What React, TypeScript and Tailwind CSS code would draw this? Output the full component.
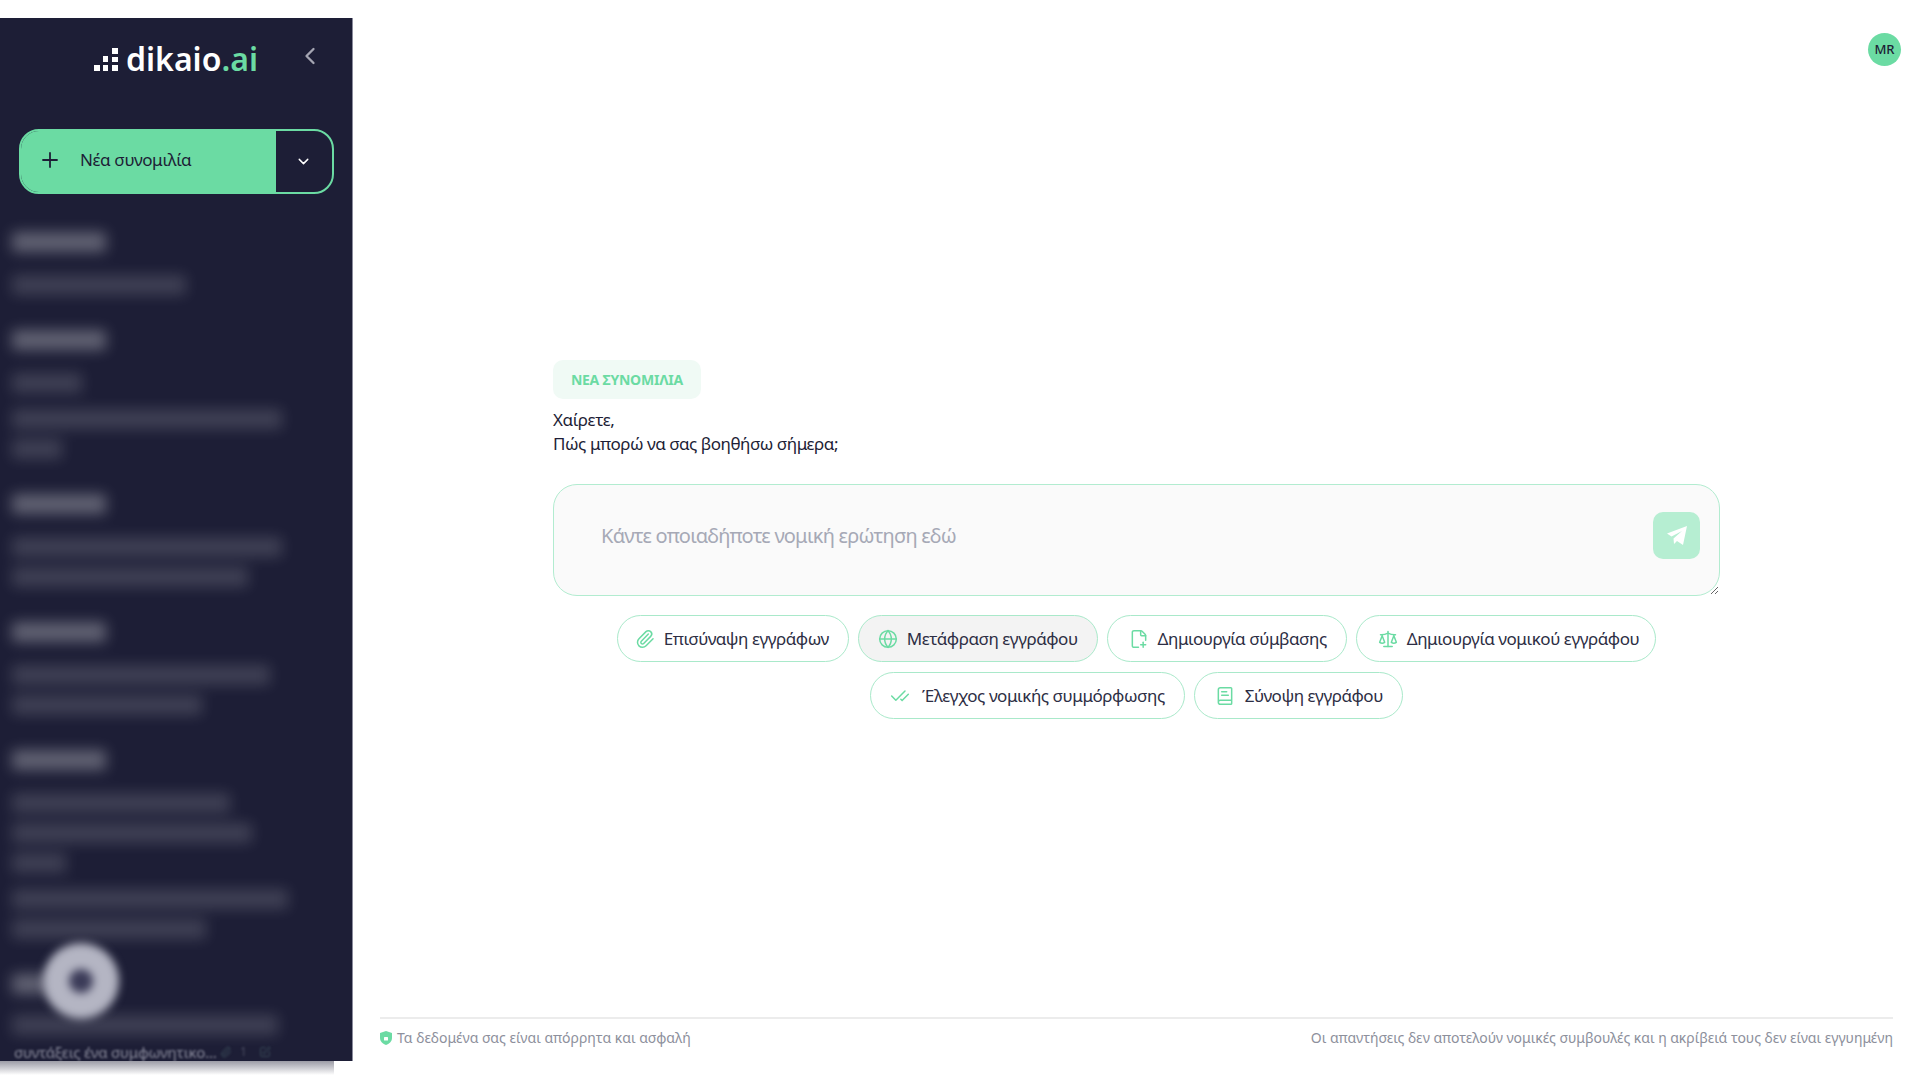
import React from "react";
import {
  BookText,
  CheckCheck,
  ChevronDown,
  ChevronLeft,
  FilePlus2,
  Globe,
  Paperclip,
  Plus,
  Scale,
  SquarePen,
} from "lucide-react";

// redacted history in the sidebar: each section is a label and entries, each entry holds line widths
const historySections: number[][][] = [
  [[174]],
  [[70], [270, 50]],
  [[270, 236]],
  [[258, 190]],
  [[218, 240, 54], [276, 194]],
];

const actions = [
  { label: "Επισύναψη εγγράφων", icon: Paperclip, spacing: "gap-[9px] pl-[17px] pr-[19px]", active: false },
  { label: "Μετάφραση εγγράφου", icon: Globe, spacing: "gap-[9px] pl-[19px] pr-[19px]", active: true },
  { label: "Δημιουργία σύμβασης", icon: FilePlus2, spacing: "gap-[9px] pl-[21px] pr-[19px]", active: false },
  { label: "Δημιουργία νομικού εγγράφου", icon: Scale, spacing: "gap-[9px] pl-[21px] pr-[16px]", active: false },
  { label: "Έλεγχος νομικής συμμόρφωσης", icon: CheckCheck, spacing: "gap-[12px] pl-[19px] pr-[19px]", active: false },
  { label: "Σύνοψη εγγράφου", icon: BookText, spacing: "gap-[10px] pl-[20px] pr-[19px]", active: false },
];

const Sidebar = () => (
  <div className="w-[353px] shrink-0 pt-[18px]">
    <aside className="relative h-[1043px] overflow-hidden border-r border-[#8a8b9c] bg-[#1d1e36]">
      <div className="flex h-[111px] items-start">
        <div className="ml-[94px] mt-[23px] flex items-center gap-[7px]">
          <svg width="25" height="25" viewBox="0 0 25 25" fill="#ffffff">
            <rect x="0" y="18" width="6" height="6" />
            <rect x="9" y="9" width="5" height="6" />
            <rect x="9" y="18" width="5" height="6" />
            <rect x="18" y="1" width="6" height="6" />
            <rect x="18" y="10" width="6" height="5" />
            <rect x="18" y="18" width="6" height="6" />
          </svg>
          <span className="text-[32px] font-semibold leading-[36px] text-white">
            dikaio<span className="text-[#6bdba3]">.ai</span>
          </span>
        </div>
        <ChevronLeft className="ml-[38px] mt-[24px] h-[28px] w-[28px] text-[#a4a5b2]" strokeWidth={2} />
      </div>

      <div className="ml-[19px] flex h-[65px] w-[315px] overflow-hidden rounded-[20px] border-2 border-[#6bdba3]">
        <button className="flex w-[255px] items-center bg-[#6bdba3] pb-[3px] pl-[17px] text-[#1d1e36]">
          <Plus className="h-[24px] w-[24px]" strokeWidth={1.8} />
          <span className="ml-[18px] text-[17px] tracking-[-0.35px]">Νέα συνομιλία</span>
        </button>
        <div className="flex flex-1 items-center justify-center pr-[2px] text-white">
          <ChevronDown className="h-[17px] w-[17px]" strokeWidth={2} />
        </div>
      </div>

      <div className="ml-[12px] mt-[38px] flex flex-col gap-[35px] blur-[7px]">
        {historySections.map((entries, i) => (
          <div key={i} className="flex flex-col gap-[23px]">
            <div className="h-[20px] w-[94px] bg-white/30" />
            <div className="flex flex-col gap-[16px]">
              {entries.map((lines, j) => (
                <div key={j} className="flex flex-col gap-[10px]">
                  {lines.map((w, k) => (
                    <div key={k} className="h-[20px] bg-white/15" style={{ width: w }} />
                  ))}
                </div>
              ))}
            </div>
          </div>
        ))}
        <div className="flex flex-col gap-[21px]">
          <div className="h-[20px] w-[40px] bg-white/30" />
          <div className="h-[20px] w-[266px] bg-white/15" />
        </div>
      </div>

      <div className="ml-[14px] mt-[6px] flex items-center text-[#8a8b9c] blur-[1px]">
        <span className="w-[206px] text-[15px] leading-[22px] tracking-[-0.2px]">συντάξεις ένα συμφωνητικο...</span>
        <Paperclip className="h-[12px] w-[12px] text-[#3a4a58]" />
        <span className="ml-[8px] text-[12px] text-[#4a4b60]">1</span>
        <SquarePen className="ml-[12px] h-[12px] w-[12px] text-[#3a4a58]" />
      </div>

      <div className="absolute left-[43px] top-[925px] flex h-[76px] w-[76px] items-center justify-center rounded-full bg-[#b4b5c3] blur-[4px]">
        <div className="h-[24px] w-[24px] rounded-full bg-[#3b3b58]" />
      </div>
    </aside>
    <div className="h-[14px] w-[334px] bg-gradient-to-b from-[#9c9ca6] to-white" />
  </div>
);

const Footer = () => (
  <footer className="mx-[27px] mt-auto flex h-[63px] items-start justify-between border-t-2 border-[#ececec] pt-[9px] text-[14px] leading-[20px] text-[#8d909c]">
    <div className="flex items-center gap-[5px]">
      <svg width="12" height="14" viewBox="0 0 12 14">
        <path d="M6 0 L12 2 V7 C12 10.5 9 13 6 14 C3 13 0 10.5 0 7 V2 Z" fill="#6bdba3" />
        <rect x="4" y="6" width="4" height="3.5" rx="0.5" fill="#ffffff" />
      </svg>
      <span>Τα δεδομένα σας είναι απόρρητα και ασφαλή</span>
    </div>
    <span className="tracking-[-0.05px]">Οι απαντήσεις δεν αποτελούν νομικές συμβουλές και η ακρίβειά τους δεν είναι εγγυημένη</span>
  </footer>
);

export default function App() {
  return (
    <div className="relative flex h-screen overflow-hidden bg-white font-['Noto_Sans',sans-serif] text-[#1d1e36]">
      <Sidebar />
      <main className="flex min-w-0 flex-1 flex-col pt-[360px]">
        <div className="mx-auto w-[1167px]">
          <div className="inline-flex h-[39px] w-[148px] items-center justify-center rounded-[10px] bg-[#f0faf5] text-[14px] font-bold tracking-[-0.2px] text-[#6bdba3]">
            ΝΕΑ ΣΥΝΟΜΙΛΙΑ
          </div>
          <p className="mt-[9px] text-[17px] leading-[24px] tracking-[-0.45px]">
            Χαίρετε,
            <br />
            Πώς μπορώ να σας βοηθήσω σήμερα;
          </p>
          <div className="relative mt-[28px]">
            <textarea
              className="block h-[112px] w-full resize-y rounded-[24px] border border-[#b2ecd0] bg-[#fafafa] pl-[47px] pr-[80px] pt-[37px] text-[20px] leading-[28px] tracking-[-0.75px] outline-none placeholder:text-[#a6a9b6]"
              placeholder="Κάντε οποιαδήποτε νομική ερώτηση εδώ"
            />
            <button className="absolute right-[20px] top-[28px] flex h-[47px] w-[47px] items-center justify-center rounded-[10px] bg-[#b6eed2]">
              <svg width="22" height="22" viewBox="0 0 22 22" fill="#ffffff">
                <path d="M21 1 L17 20 L11 16 L8 19 L7.5 13.5 L16 6 L5.5 11.5 L1 8.5 Z" />
              </svg>
            </button>
          </div>
          <div className="mx-auto mt-[19px] flex w-[1060px] flex-wrap justify-center gap-x-[9px] gap-y-[10px]">
            {actions.map(({ label, icon: Icon, spacing, active }) => (
              <button
                key={label}
                className={`flex h-[47px] items-center rounded-full border border-[#a9e9ca] text-[17px] tracking-[-0.45px] text-[#2d2e44] ${spacing} ${
                  active ? "bg-[#f3f3f3]" : "bg-white"
                }`}
              >
                <Icon className="h-[20px] w-[20px] text-[#6bdba3]" strokeWidth={1.8} />
                {label}
              </button>
            ))}
          </div>
        </div>
        <Footer />
      </main>
      <div className="absolute left-[1868px] top-[33px] flex h-[33px] w-[33px] items-center justify-center rounded-full bg-[#6bdba3] text-[13px] font-medium">
        MR
      </div>
    </div>
  );
}
